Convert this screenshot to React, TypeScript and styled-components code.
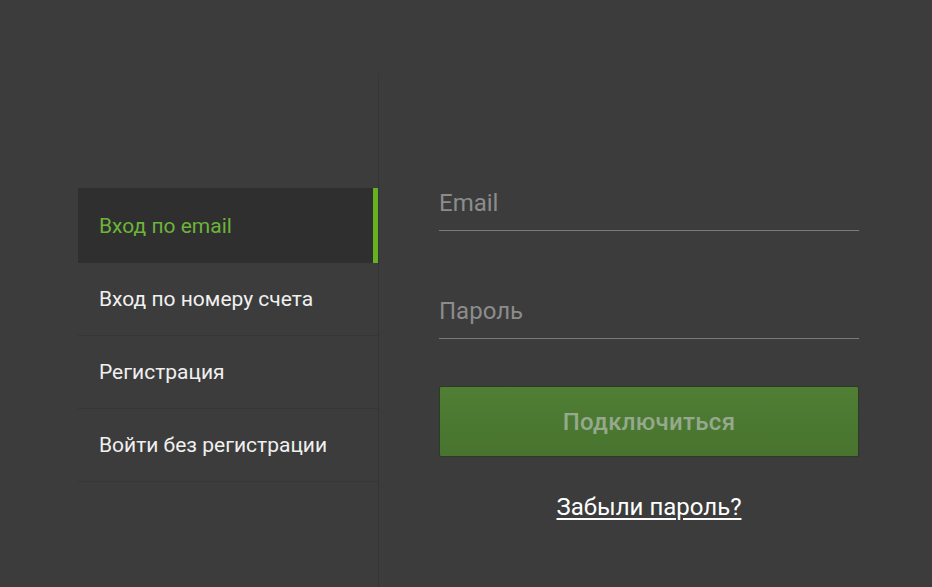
import React, { useState } from 'react'
import styled, { createGlobalStyle } from 'styled-components'

const GlobalStyle = createGlobalStyle`
	html, body {
		margin: 0;
		padding: 0;
		background-color: #3c3c3c;
		font-family: Roboto, 'Liberation Sans', Arial, sans-serif;
	}
`

const tabs = ['Вход по email', 'Вход по номеру счета', 'Регистрация', 'Войти без регистрации']

export default function App() {
	const [active, setActive] = useState(0)
	const [email, setEmail] = useState('')
	const [password, setPassword] = useState('')

	return (
		<>
			<GlobalStyle />
			<Wrapper>
				<Menu>
					{tabs.map((label, i) => (
						<MenuItem key={label} $active={i === active} onClick={() => setActive(i)}>
							{label}
						</MenuItem>
					))}
				</Menu>
				<FormPanel>
					<Form onSubmit={(e) => e.preventDefault()}>
						<Field
							type="email"
							placeholder="Email"
							value={email}
							onChange={(e) => setEmail(e.target.value)}
						/>
						<Field
							type="password"
							placeholder="Пароль"
							value={password}
							onChange={(e) => setPassword(e.target.value)}
						/>
						<SubmitButton type="submit">Подключиться</SubmitButton>
						<ForgotLink href="#">Забыли пароль?</ForgotLink>
					</Form>
				</FormPanel>
			</Wrapper>
		</>
	)
}

const Wrapper = styled.div`
	display: flex;
	min-height: 517px;
	padding: 70px 0 0 78px;
`

const Menu = styled.div`
	width: 300px;
	padding-top: 118px;
	display: flex;
	flex-direction: column;
`

const MenuItem = styled.div<{ $active: boolean }>`
	display: flex;
	align-items: center;
	box-sizing: border-box;
	height: ${(p) => (p.$active ? '75px' : '73px')};
	padding-left: 21px;
	font-size: 21px;
	color: ${(p) => (p.$active ? '#6cb43a' : '#f0f0f0')};
	background-color: ${(p) => (p.$active ? '#2f2f2f' : 'transparent')};
	border-bottom: ${(p) => (p.$active ? 'none' : '1px solid #363636')};
	box-shadow: ${(p) => (p.$active ? 'inset -5px 0 0 #67b020' : 'none')};
	cursor: pointer;
`

const FormPanel = styled.div`
	width: 480px;
	padding: 114px 0 0 60px;
	border-left: 1px solid;
	border-image: linear-gradient(to bottom, rgba(52, 52, 52, 0), #343434 14px) 1;
`

const Form = styled.form`
	width: 420px;
	display: flex;
	flex-direction: column;
`

const Field = styled.input`
	height: 47px;
	box-sizing: border-box;
	padding: 0 0 9px;
	margin-bottom: 61px;
	background: transparent;
	border: none;
	border-bottom: 1px solid #7a7a7a;
	outline: none;
	font-family: Roboto, 'Liberation Sans', Arial, sans-serif;
	font-size: 24px;
	color: #e0e0e0;
	&::placeholder {
		color: #8c8c8c;
	}
	& + & {
		margin-bottom: 47px;
	}
`

const SubmitButton = styled.button`
	height: 71px;
	border: 1px solid #2c3b23;
	border-radius: 2px;
	background: linear-gradient(to bottom, #4f7e34, #48742f);
	color: #96a98d;
	font-family: Roboto, 'Liberation Sans', Arial, sans-serif;
	font-size: 24px;
	font-weight: 500;
	letter-spacing: 0.3px;
	cursor: pointer;
`

const ForgotLink = styled.a`
	align-self: center;
	margin-top: 36px;
	color: #ffffff;
	font-size: 24px;
	text-decoration: underline;
	text-underline-offset: 3px;
`
